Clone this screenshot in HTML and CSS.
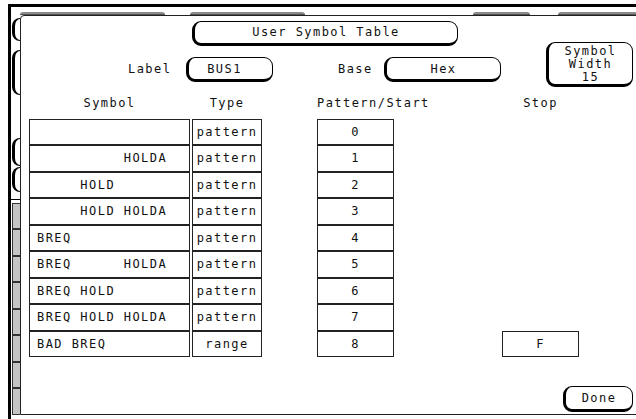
FILE: index.html
```html
<!DOCTYPE html>
<html lang="en">
<head>
    <meta charset="UTF-8">
    <title>User Symbol Table</title>
    <link rel="stylesheet" href="styles.css">
</head>
<body>
    <div class="screen">
        <div class="top-strip">
            <span class="peek peek-1"></span>
            <span class="peek peek-2"></span>
            <span class="peek peek-3"></span>
            <span class="peek peek-4"></span>
        </div>

        <div class="main">
            <div class="side">
                <div class="tab tab-1"></div>
                <div class="tab tab-2"></div>
                <div class="tab tab-3"></div>
                <div class="tab tab-4"></div>
                <div class="side-rule"></div>
                <div class="side-cells">
                    <div class="side-cell"></div>
                    <div class="side-cell"></div>
                    <div class="side-cell"></div>
                    <div class="side-cell"></div>
                    <div class="side-cell"></div>
                    <div class="side-cell"></div>
                    <div class="side-cell"></div>
                    <div class="side-cell"></div>
                </div>
            </div>

            <div class="dialog">
                <div class="dialog-head">
                    <div class="head-left">
                        <div class="btn title-btn">User Symbol Table</div>
                        <div class="label-row">
                            <span class="field-label">Label</span>
                            <div class="btn field-btn bus-btn">BUS1</div>
                            <span class="field-label base-label">Base</span>
                            <div class="btn field-btn hex-btn">Hex</div>
                        </div>
                    </div>
                    <div class="btn width-btn">Symbol<br>Width<br>15</div>
                </div>

                <div class="table">
                    <div class="col col-symbol">
                        <div class="col-head">Symbol</div>
                        <div class="cell"></div>
                        <div class="cell">          HOLDA</div>
                        <div class="cell">     HOLD</div>
                        <div class="cell">     HOLD HOLDA</div>
                        <div class="cell">BREQ</div>
                        <div class="cell">BREQ      HOLDA</div>
                        <div class="cell">BREQ HOLD</div>
                        <div class="cell">BREQ HOLD HOLDA</div>
                        <div class="cell">BAD BREQ</div>
                    </div>
                    <div class="col col-type">
                        <div class="col-head">Type</div>
                        <div class="cell">pattern</div>
                        <div class="cell">pattern</div>
                        <div class="cell">pattern</div>
                        <div class="cell">pattern</div>
                        <div class="cell">pattern</div>
                        <div class="cell">pattern</div>
                        <div class="cell">pattern</div>
                        <div class="cell">pattern</div>
                        <div class="cell">range</div>
                    </div>
                    <div class="col col-pattern">
                        <div class="col-head">Pattern/Start</div>
                        <div class="cell">0</div>
                        <div class="cell">1</div>
                        <div class="cell">2</div>
                        <div class="cell">3</div>
                        <div class="cell">4</div>
                        <div class="cell">5</div>
                        <div class="cell">6</div>
                        <div class="cell">7</div>
                        <div class="cell">8</div>
                    </div>
                    <div class="col col-stop">
                        <div class="col-head">Stop</div>
                        <div class="cell stop-cell">F</div>
                    </div>
                </div>

                <div class="dialog-foot">
                    <div class="btn done-btn">Done</div>
                </div>
            </div>
        </div>
    </div>
</body>
</html>
```

FILE: styles.css
```css
:root {
    --ink: #111;
    --line: #222;
    --peek: #8c8c8c;
    --side-fill: #c4c4c4;
    --row-h: 26.44px;
}

html, body {
    margin: 0;
    padding: 0;
    background: #fff;
    overflow: hidden;
}

body {
    width: 636px;
    height: 419px;
    font-family: "DejaVu Sans Mono", "Liberation Mono", monospace;
    font-size: 12px;
    letter-spacing: 1.45px;
    color: var(--ink);
}

/* the instrument screen; its right side runs off the picture */
.screen {
    margin: 4px 0 0 8px;
    width: 628px;
    height: 415px;
    box-sizing: border-box;
    border-top: 3px solid #000;
    border-left: 3px solid #000;
    overflow: hidden;
}

/* bottoms of the buttons hidden behind the dialog */
.top-strip {
    display: flex;
    align-items: flex-end;
    height: 8px;
    padding-left: 9px;
}

.peek {
    display: block;
    flex-shrink: 0;
    height: 3px;
    background: var(--peek);
    border-bottom: 1px solid #555;
    box-sizing: border-box;
    border-radius: 3px 3px 0 0;
}

.peek-1 { width: 145px; }
.peek-2 { width: 115px; margin-left: 25px; }
.peek-3 { width: 57px; margin-left: 168px; }
.peek-4 { width: 90px; margin-left: 28px; }

.main {
    display: flex;
}

.side {
    width: 9px;
    flex-shrink: 0;
    display: flex;
    flex-direction: column;
    align-items: flex-end;
}

.tab {
    width: 8px;
    box-sizing: border-box;
    border: 1px solid #000;
    border-left-width: 3px;
    border-right: none;
    border-radius: 8px 0 0 8px;
}

.tab-1 { height: 23px; margin-top: 3px; }
.tab-2 { height: 45px; margin-top: 9px; }
.tab-3 { height: 28px; margin-top: 43px; }
.tab-4 { height: 25px; margin-top: 1px; }

.side-rule {
    width: 9px;
    height: 1px;
    background: #000;
    margin-top: 7px;
}

.side-cells {
    margin-top: 3px;
    display: flex;
    flex-direction: column;
}

.side-cell {
    width: 8px;
    height: var(--row-h);
    box-sizing: border-box;
    background: var(--side-fill);
    border: 1px solid #333;
    border-right: none;
}

.dialog {
    width: 620px;
    height: 400px;
    flex-shrink: 0;
    box-sizing: border-box;
    border: 1px solid var(--line);
    border-radius: 4px 0 0 0;
    background: #fff;
    display: flex;
    flex-direction: column;
}

.btn {
    box-sizing: border-box;
    border: 1px solid #000;
    border-left-width: 3px;
    border-bottom-width: 3px;
    border-radius: 9px;
    text-align: center;
    background: #fff;
}

.dialog-head {
    display: flex;
    align-items: flex-start;
}

.head-left {
    margin-left: 107px;
    margin-top: 5px;
}

.title-btn {
    margin-left: 64px;
    width: 266px;
    height: 25px;
    line-height: 21px;
}

.label-row {
    display: flex;
    align-items: center;
    margin-top: 11px;
}

.field-label {
    width: 58px;
    line-height: 25px;
}

.base-label {
    width: 46px;
    margin-left: 65px;
}

.field-btn {
    height: 25px;
    line-height: 22px;
}

.bus-btn {
    width: 87px;
    padding-right: 12px;
}

.hex-btn {
    width: 117px;
}

.width-btn {
    margin-left: auto;
    margin-right: 6px;
    margin-top: 26px;
    width: 87px;
    height: 45px;
    line-height: 13px;
    padding-top: 2px;
}

.table {
    display: flex;
    margin-left: 8px;
}

.col {
    display: flex;
    flex-direction: column;
    flex-shrink: 0;
}

.col-head {
    height: 32px;
    line-height: 32px;
    text-align: center;
}

.cell {
    height: var(--row-h);
    line-height: 24px;
    box-sizing: border-box;
    border: 1px solid var(--line);
    text-align: center;
    white-space: pre;
}

.col-symbol { width: 161px; }
.col-symbol .cell {
    text-align: left;
    padding-left: 7px;
}

.col-type { width: 70px; margin-left: 2px; }
.col-pattern { width: 77px; margin-left: 55px; }
.col-stop { width: 77px; margin-left: 108px; }

.stop-cell {
    margin-top: calc(var(--row-h) * 8);
}

.dialog-foot {
    margin-top: auto;
    display: flex;
    justify-content: flex-end;
}

.done-btn {
    width: 70px;
    height: 26px;
    line-height: 22px;
    margin-right: 6px;
    margin-bottom: 2px;
}
```
